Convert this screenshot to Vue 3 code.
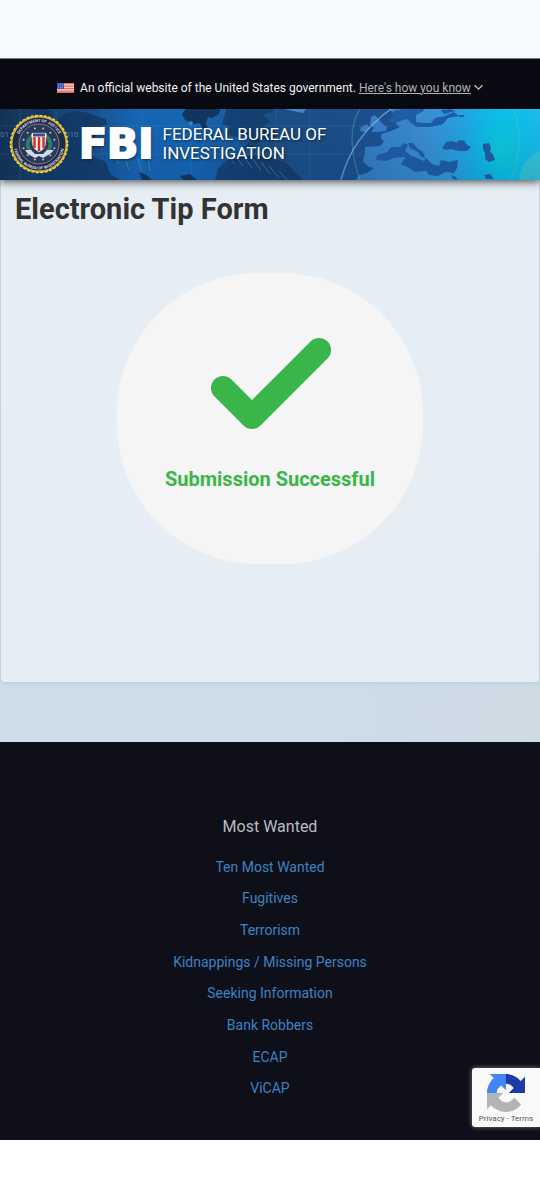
<script setup>
import { ref } from 'vue'

const showInfo = ref(false)

const mostWanted = [
  'Ten Most Wanted',
  'Fugitives',
  'Terrorism',
  'Kidnappings / Missing Persons',
  'Seeking Information',
  'Bank Robbers',
  'ECAP',
  'ViCAP',
]

// stars around the shield of the seal
const stars = Array.from({ length: 12 }, (_, i) => {
  const a = ((i * 30 + 15) * Math.PI) / 180
  return { x: 30 + 16 * Math.cos(a), y: 30 + 16 * Math.sin(a) }
})
</script>

<template>
  <div class="page">
    <div class="top-strip"></div>

    <div class="gov-banner">
      <svg class="flag" viewBox="0 0 17 10" aria-hidden="true">
        <rect width="17" height="10" fill="#f3d9d6" />
        <path d="M0 .7h17M0 3.2h17M0 5.7h17M0 8.2h17M0 9.7h17" stroke="#e9685f" stroke-width="1.3" />
        <rect width="7" height="6" fill="#3f4fb4" />
        <path d="M1 1.2h6M1 3h6M1 4.8h6" stroke="#bcc5ee" stroke-width=".7" stroke-dasharray="1 1" />
      </svg>
      <p class="gov-text">
        An official website of the United States government.
        <button type="button" class="know" :aria-expanded="showInfo" @click="showInfo = !showInfo">Here's how you know</button>
      </p>
      <svg class="chevron" viewBox="0 0 8 6" aria-hidden="true">
        <path d="M.5 1 4 4.5 7.5 1" fill="none" stroke="#c4c5c9" stroke-width="1.1" />
      </svg>
    </div>

    <header class="header">
      <svg class="map" viewBox="0 0 540 71" preserveAspectRatio="xMidYMid slice" aria-hidden="true">
        <defs>
          <linearGradient id="sea">
            <stop offset="0" stop-color="#143154" />
            <stop offset=".15" stop-color="#184b83" />
            <stop offset=".25" stop-color="#1765b4" />
            <stop offset=".36" stop-color="#1765b4" />
            <stop offset=".5" stop-color="#1b4f86" />
            <stop offset=".62" stop-color="#1c4d8a" />
            <stop offset="1" stop-color="#1c5da6" />
          </linearGradient>
          <linearGradient id="land" gradientUnits="userSpaceOnUse" x1="350" y1="0" x2="540" y2="0">
            <stop offset="0" stop-color="#3478c0" />
            <stop offset=".4" stop-color="#3b8fd2" />
            <stop offset=".62" stop-color="#1fa8e4" />
            <stop offset=".8" stop-color="#0ac2ec" />
            <stop offset="1" stop-color="#1fbcea" />
          </linearGradient>
          <linearGradient id="shade" x2="0" y2="1">
            <stop offset="0" stop-color="#06305f" stop-opacity="0" />
            <stop offset="1" stop-color="#06305f" stop-opacity=".15" />
          </linearGradient>
          <radialGradient id="glow">
            <stop offset="0" stop-color="#11d0d2" stop-opacity=".8" />
            <stop offset="1" stop-color="#00b8ef" stop-opacity="0" />
          </radialGradient>
        </defs>
        <rect width="540" height="71" fill="url(#sea)" />
        <path d="M0 17h540M0 45h540M20 0v71M56 0v71M102 0v71M142 0v71M191 0v71M225 0v71M276 0v71M310 0v71" stroke="#5394cc" stroke-opacity=".2" />
        <g fill="#12355f">
          <path d="M32 0h17l4 8-7 7-7-5-4-6z" />
          <path d="M55 12 65 5l11-3 13 2 10 4 7 2 1 6-6 1 3 7-6-2-3 6-6 6-4 8 7 6 13 4 6 14 8 4v6H35l4-12 13-15 4-14-7-5z" opacity=".75" />
          <path d="M186 0h34l-1 5-7 4-4-1-2 6 2 7-5-1-3-6-7 1-8-4-3-6z" />
          <path d="M226 0h49l-3 3-9 3 7 6-7 6 10 1 4 8-7 5-8-1-7 7-13 2 8-8-5-7-10 3-8-3 3-7-8-3z" opacity=".65" />
          <path d="M224 53 235 48l22-2 13 3 16 5 17 17h-88l3-11z" opacity=".7" />
          <path d="M139 63l8 3 5 5h-10zM180 67l10-2 7 6h-14z" />
        </g>
        <path d="m230 49 5 6m2-6 6 8m2-8 7 10m1-9 8 12m0-9 9 12m-1-8 10 12m0-7 8 9M116 50l3 5m7-3 3 9m9-12 3 12m7-11 2 12" fill="none" stroke="#77a6cf" stroke-opacity=".45" />

        <!-- Europe and Asia -->
        <path d="M390 0l4 6 1 8 5 4-9 4-10 3 0 4 3 4-4 4-15 1 0 6-2 9 6 5 5 1-7 5-8 2-3 5-6 4H540V0z" fill="url(#land)" />
        <path d="m371 8 4-2 4 5 4 4 4 3-1 4-9 1-6 0 3-4-4-4zM361 18l6-3 3 4-4 4-6-1z" fill="#397fc6" />
        <ellipse cx="502" cy="40" rx="42" ry="60" fill="url(#glow)" />
        <circle cx="550" cy="72" r="31" fill="#42cbd2" opacity=".7" />
        <g fill="#1f5da6">
          <path d="M393 2l10-2h22l-3 3-6 3 0 7 8 1 7 0 4-5 10-2 9-4 5 4-11 2-5 6-7 2-8 1-11 0-6-4-4-4-7 2-6 3-5-3 4-6zM441 1l9-1 6 2-12 3zM459 6l5 0 0 2-5 0z" />
          <path d="m377 46 10-3 4-5 9 0 4-4 4 2-3 6 4 3 2 2 4 3-2 2-9-4-10 1-8 3-10-1z" />
          <path d="m408 34 5 0 5 6 5 3 2 6-4-1-3-5-8-4zM404 50l8-3 12 5 2-3 6 6 7 2 2-6 8 2 9-2-1 8-3 5-9-1-7 4-9-1-3-4-11 1-9-6-5-1z" />
          <path d="m442 39 4-6 6-1 6 2 6-3 3 5 4 2-4 4-8 0-8-2-6 1zM483 35l6-1 2 5-1 4 3 2 2 6-6 2-4-3 0-6-2-4zM457 32l4-1 1 2-4 1zM484 66l6-1 4 5h-8zM451 66l5 2 1 3-4-1z" />
        </g>
        <path d="M284 0h22l-3 4-5-1z" fill="#4385ca" />
        <path d="M391 0Q352 28 341 71" fill="none" stroke="#9bcaef" stroke-opacity=".6" stroke-width="1.5" />
        <path d="M513 0Q526 31 511 71M360 0q-16 25 0 71" fill="none" stroke="#6cd8b7" stroke-opacity=".4" />
        <rect width="540" height="71" fill="url(#shade)" />
        <circle cx="191" cy="14" r="2" fill="#65b2e8" opacity=".5" />
        <g fill="#7aacd7" fill-opacity=".6" font-family="Roboto, sans-serif" font-size="8">
          <text x="0" y="28">01</text>
          <text x="65" y="28">010</text>
        </g>
      </svg>

      <a href="#" class="brand">
        <svg class="seal" viewBox="0 0 60 60" aria-hidden="true">
          <defs>
            <path id="arc-top" d="M8 30a22 22 0 0 1 44 0" />
            <path id="arc-bottom" d="M6.500 20a25.500 25.500 0 1 0 47 0" />
          </defs>
          <circle cx="30" cy="30" r="27.5" fill="#1b2c4e" stroke="#d8b02c" stroke-width="2" />
          <circle cx="30" cy="30" r="28.6" fill="none" stroke="#f2d84a" stroke-width="1.4" stroke-dasharray="3 1.500" />
          <circle cx="30" cy="30" r="20" fill="#26386a" stroke="#c3a44c" stroke-width=".7" />
          <g fill="#d9dde6" font-family="Roboto, sans-serif" font-size="4" font-weight="700" text-anchor="middle">
            <text><textPath href="#arc-top" startOffset="50%">DEPARTMENT OF JUSTICE</textPath></text>
            <text><textPath href="#arc-bottom" startOffset="50%">FEDERAL BUREAU OF INVESTIGATION</textPath></text>
          </g>
          <circle v-for="(s, i) in stars" :key="i" :cx="s.x" :cy="s.y" r="1" fill="#e5c845" />
          <path d="M22 23q-7 7 0 15M38 23q7 7 0 15" fill="none" stroke="#268063" stroke-width="3.5" />
          <path d="M23 19h14l1 3q-2 2-1 5 0 8-7 11-7-3-7-11 1-3-1-5z" fill="#f3eee9" stroke="#c7a23d" stroke-width=".6" />
          <path d="M24 19.5h12v3H24z" fill="#354d9c" />
          <path d="M25.5 23v11M30 23v14M34.500 23v11" stroke="#cf3034" stroke-width="2.4" />
          <path d="m16 36 6 0 4 4h8l4-4 7 0-4 4-7 4-4-2-4 2-7-4z" fill="#d6dae2" />
        </svg>
        <span class="fbi">FBI</span>
        <span class="bureau">FEDERAL BUREAU OF<br />INVESTIGATION</span>
      </a>
    </header>

    <main class="main">
      <section class="card">
        <h1 class="title">Electronic Tip Form</h1>
        <div class="success">
          <svg class="check" viewBox="0 0 122 92" aria-hidden="true">
            <path d="M14 50 43 79 110 12" fill="none" stroke="#39b54a" stroke-width="24" stroke-linecap="round" stroke-linejoin="round" />
          </svg>
          <h2 class="success-text">Submission Successful</h2>
        </div>
      </section>
    </main>

    <footer class="footer">
      <h3 class="footer-title">Most Wanted</h3>
      <ul class="links">
        <li v-for="item in mostWanted" :key="item"><a href="#">{{ item }}</a></li>
      </ul>

      <div class="recaptcha">
        <svg class="recaptcha-logo" viewBox="0 0 64 64" aria-hidden="true">
          <path d="M64 31.955l-.033-1.37V4.687l-7.16 7.16C50.948 4.674 42.033.093 32.05.093c-10.4 0-19.622 4.96-25.458 12.64l11.736 11.86a15.55 15.55 0 0 1 4.754-5.334c2.05-1.6 4.952-2.906 8.968-2.906.485 0 .86.057 1.135.163 4.976.393 9.288 3.14 11.828 7.124l-8.307 8.307L64 31.953" fill="#1c3aa9" />
          <path d="M31.862.094l-1.37.033H4.594l7.16 7.16C4.58 13.147 0 22.06 0 32.046c0 10.4 4.96 19.622 12.64 25.458L24.5 45.768a15.55 15.55 0 0 1-5.334-4.754c-1.6-2.05-2.906-4.952-2.906-8.968 0-.485.057-.86.163-1.135.393-4.976 3.14-9.288 7.124-11.828l8.307 8.307L31.86.095" fill="#4285f4" />
          <path d="M.001 32.045l.033 1.37v25.898l7.16-7.16c5.86 7.173 14.774 11.754 24.76 11.754 10.4 0 19.622-4.96 25.458-12.64l-11.736-11.86a15.55 15.55 0 0 1-4.754 5.334c-2.05 1.6-4.952 2.906-8.968 2.906-.485 0-.86-.057-1.135-.163-4.976-.393-9.288-3.14-11.828-7.124l8.307-8.307L0 32.045" fill="#b3b4b6" />
        </svg>
        <div class="recaptcha-links"><a href="#">Privacy</a> - <a href="#">Terms</a></div>
      </div>
    </footer>
  </div>
</template>

<style>
body {
  background: #fff;
}
</style>

<style scoped>
.page { font-family: Roboto, 'Liberation Sans', sans-serif; color: #333; }
.top-strip { height: 58px; background: #f5faff; }

.gov-banner {
  display: flex; align-items: center; justify-content: center;
  box-sizing: border-box; height: 51px; padding-top: 7px;
  background: #090a12; border-top: 1px solid #777a80;
}
.flag { width: 17px; height: 10px; margin-right: 6px; }
.gov-text { margin: 0; font-size: 12px; line-height: 16px; color: #f1f1f1; }
.know { padding: 0; border: 0; background: none; font: inherit; color: #b0b1b5; text-decoration: underline; cursor: pointer; }
.chevron { width: 9px; height: 7px; margin-left: 3px; }

.header { position: relative; height: 71px; box-shadow: 0 2px 8px rgba(0, 0, 0, 0.65); z-index: 1; }
.map { position: absolute; inset: 0; width: 100%; height: 100%; }
.brand {
  position: relative; display: flex; align-items: center; height: 100%;
  padding: 0 9px 2px; box-sizing: border-box; color: #fff; text-decoration: none;
}
.seal { width: 60px; height: 60px; margin-right: 10px; }
.fbi {
  font-family: 'DejaVu Sans', sans-serif; font-size: 41px; line-height: 48px; font-weight: 700;
  -webkit-text-stroke: 2px #fff; text-shadow: 1px 2px 3px rgba(0, 0, 0, 0.5);
}
.bureau { margin-left: 9px; font-size: 17px; line-height: 19px; text-shadow: 1px 1px 3px rgba(0, 0, 0, 0.6); }

.main { padding-bottom: 59px; background: linear-gradient(100deg, #cfdde9 60%, #cddae4); }
.card {
  box-sizing: border-box; min-height: 503px; padding: 12px 14px 117px;
  background: linear-gradient(110deg, #e7eef4, #e6eef5 60%, #e6ecf4);
  border: 1px solid #c4d1dd; border-top: 0; border-radius: 0 0 5px 5px;
  box-shadow: 0 2px 5px #c3d4e2;
}
.title { margin: 0; font-size: 29px; line-height: 34px; font-weight: 700; color: #333; }
.success {
  display: flex; flex-direction: column; align-items: center;
  box-sizing: border-box; width: 60%; height: 291px; margin: 47px auto 0; padding-top: 65px;
  background: #f5f5f5; border-radius: 140px;
}
.check { width: 122px; height: 92px; }
.success-text { margin: 37px 0 0; font-size: 20px; line-height: 24px; font-weight: 700; color: #39b54a; }

.footer { position: relative; padding: 75px 0 36px; background: #0f0f19; text-align: center; }
.footer-title { margin: 0 0 14px; font-size: 16px; line-height: 20px; font-weight: 400; color: #bcbcbe; }
.links { display: grid; grid-auto-rows: 1fr; align-items: center; min-height: 253px; margin: 0; padding: 0; list-style: none; }
.links li { font-size: 14px; line-height: 20px; }
.links a { color: #3b82c4; text-decoration: none; }

.recaptcha {
  position: absolute; right: 0; bottom: 13px; width: 68px; height: 59px;
  display: flex; flex-direction: column; align-items: center; box-sizing: border-box; padding-top: 6px;
  background: #f9f9f9; border-radius: 3px 0 0 3px; box-shadow: 0 0 5px #777;
}
.recaptcha-logo { width: 38px; height: 38px; }
.recaptcha-links { margin-top: 2px; font-size: 8px; line-height: 10px; color: #555; white-space: nowrap; }
.recaptcha-links a { color: inherit; text-decoration: none; }
</style>
